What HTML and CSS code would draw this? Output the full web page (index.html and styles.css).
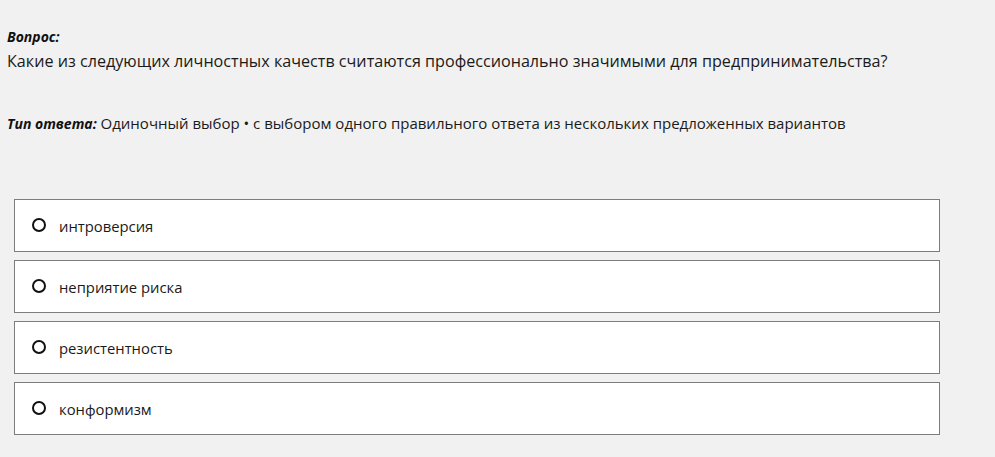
FILE: index.html
```html
<html>
    <head>
        <link rel="stylesheet" href="styles.css">
    </head>
    <body>
        <div class="question">
            <div class="label">Вопрос:</div>
            <div class="text">Какие из следующих личностных качеств считаются профессионально значимыми для предпринимательства?</div>
        </div>
        <div class="answer-type">
            <span class="label">Тип ответа:</span> Одиночный выбор • с выбором одного правильного ответа из нескольких предложенных вариантов
        </div>
        <div class="options">
            <div class="option"><span class="radio"></span>интроверсия</div>
            <div class="option"><span class="radio"></span>неприятие риска</div>
            <div class="option"><span class="radio"></span>резистентность</div>
            <div class="option"><span class="radio"></span>конформизм</div>
        </div>
    </body>
</html>
```

FILE: styles.css
```css
body{
    margin: 0;
    background-color: #f1f1f1;
    font-family: "Open Sans", "Noto Sans", sans-serif;
    font-size: 15px;
    color: #1a1a1a;
}
.question{
    padding: 26px 0 0 7px;
}
.question .label{
    line-height: 22px;
}
.question .text{
    font-size: 16.15px;
    line-height: 26px;
}
.label{
    font-weight: bold;
    font-style: italic;
    font-size: 14px;
    color: #111;
}
.answer-type{
    padding: 38px 0 0 7px;
    line-height: 22px;
}
.options{
    display: flex;
    flex-direction: column;
    gap: 8px;
    margin: 64px 0 0 14px;
    width: 926px;
}
.option{
    display: flex;
    align-items: center;
    height: 51px;
    background-color: white;
    border: 1px solid #7d7d7d;
    padding-left: 17px;
    font-size: 14.8px;
}
.radio{
    width: 10px;
    height: 10px;
    border: 2px solid #111;
    border-radius: 50%;
    margin-right: 13px;
    margin-top: -2px;
}
```
